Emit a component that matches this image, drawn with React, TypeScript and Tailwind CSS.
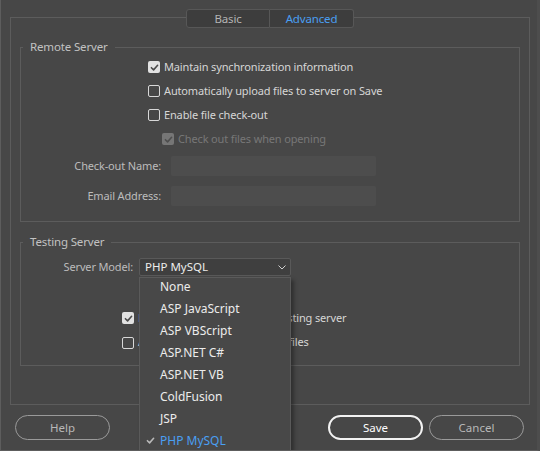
import React from 'react';

const font = { fontFamily: '"Noto Sans", "Open Sans", sans-serif' };

const Check = ({ className }: { className: string }) => (
    <svg viewBox="0 0 12 12" className={className} fill="none">
        <path d="M2.6 6.2 L5 8.6 L9.4 3.6" stroke="currentColor" strokeWidth="1.7" strokeLinecap="round" strokeLinejoin="round" />
    </svg>
);

const Checkbox = ({ checked, disabled }: { checked?: boolean; disabled?: boolean }) => {
    if (checked) {
        return (
            <span
                className={`w-[12px] h-[12px] rounded-[2px] flex items-center justify-center shrink-0 ${
                    disabled ? 'bg-[#767676] text-[#4e4e4e]' : 'bg-[#e2e2e2] text-[#4a4a4a]'
                }`}
            >
                <Check className="w-[11px] h-[11px]" />
            </span>
        );
    }
    return <span className="w-[12px] h-[12px] rounded-[2px] border border-[#d8d8d8] shrink-0"></span>;
};

const CheckRow = ({ label, checked, disabled, indent, h = 'h-[24px]' }: { label: string; checked?: boolean; disabled?: boolean; indent: string; h?: string }) => (
    <div className={`${h} flex items-center gap-[4px] ${indent}`}>
        <Checkbox checked={checked} disabled={disabled} />
        <span className={`whitespace-nowrap ${disabled ? 'text-[#777777]' : 'text-[#d6d6d6]'}`}>{label}</span>
    </div>
);

const serverModels = ['None', 'ASP JavaScript', 'ASP VBScript', 'ASP.NET C#', 'ASP.NET VB', 'ColdFusion', 'JSP', 'PHP MySQL'];

export default function App() {
    return (
        <div
            style={font}
            className="w-[540px] h-[451px] bg-[#474747] border-l border-b border-r-[3px] border-l-[#5d5d5d] border-b-[#5d5d5d] border-r-[#4d4d4d] text-[11px] tracking-[-0.15px] text-[#d6d6d6] overflow-hidden"
        >
            <div className="pt-[17px] pl-[9px]">
                <div className="w-[520px] h-[388px] border border-[#5c5c5c]">
                    {/* tabs */}
                    <div className="flex justify-center -mt-[9px]">
                        <div className="w-[84px] h-[19px] bg-[#3d3d3d] border border-[#575757] rounded-l-[3px] flex items-center justify-center text-[#b4b4b4] text-[11.5px]">
                            Basic
                        </div>
                        <div className="w-[84px] h-[19px] bg-[#3d3d3d] border border-l-0 border-[#575757] rounded-r-[3px] flex items-center justify-center text-[#4a9ff2] text-[11.5px]">
                            Advanced
                        </div>
                    </div>

                    {/* Remote Server */}
                    <fieldset className="mx-[9px] mt-[11px] border border-[#5c5c5c] pb-[15px]">
                        <legend className="ml-[2px] px-[7px] text-[#c2c2c2] leading-[16px] text-[11.5px]">Remote Server</legend>
                        <CheckRow indent="pl-[127px]" checked label="Maintain synchronization information" />
                        <CheckRow indent="pl-[127px]" label="Automatically upload files to server on Save" />
                        <CheckRow indent="pl-[127px]" label="Enable file check-out" />
                        <CheckRow indent="pl-[141px]" checked disabled label="Check out files when opening" />
                        <div className="mt-[5px] flex items-center gap-[10px]">
                            <span className="w-[140px] text-right text-[#bcbcbc]">Check-out Name:</span>
                            <div className="w-[205px] h-[20px] bg-[#4d4d4d] rounded-[2px]"></div>
                        </div>
                        <div className="mt-[10px] flex items-center gap-[10px]">
                            <span className="w-[140px] text-right text-[#bcbcbc]">Email Address:</span>
                            <div className="w-[205px] h-[20px] bg-[#4d4d4d] rounded-[2px]"></div>
                        </div>
                    </fieldset>

                    {/* Testing Server */}
                    <fieldset className="mx-[9px] mt-[12px] border border-[#5c5c5c] pb-[10px]">
                        <legend className="ml-[2px] px-[7px] text-[#c2c2c2] leading-[16px] text-[11.5px]">Testing Server</legend>
                        <div className="mt-[8px] flex items-center gap-[6px]">
                            <span className="w-[112px] text-right text-[#bcbcbc]">Server Model:</span>
                            <div className="relative">
                                <div className="w-[152px] h-[18px] bg-[#3f3f3f] border border-[#595959] rounded-[2px] flex items-center justify-between pl-[5px] pr-[4px] text-[#ececec] text-[11.5px] tracking-normal">
                                    <span>PHP MySQL</span>
                                    <svg viewBox="0 0 8 5" className="w-[8px] h-[5px]" fill="none">
                                        <path d="M0.5 0.5 L4 4 L7.5 0.5" stroke="#cfcfcf" strokeWidth="1" />
                                    </svg>
                                </div>
                                <div className="absolute left-0 top-[19px] z-10 w-[152px] h-[190px] bg-[#484848] border border-[#5a5a5a] shadow-[3px_3px_4px_rgba(0,0,0,0.35)] text-[12px] tracking-normal">
                                    {serverModels.map((m, i) => (
                                        <div
                                            key={m}
                                            className={`relative h-[22px] flex items-center pl-[20px] ${i === 0 ? '-mt-[2px]' : ''} ${
                                                m === 'PHP MySQL' ? 'text-[#4a9ff2]' : 'text-[#ececec]'
                                            }`}
                                        >
                                            {m === 'PHP MySQL' && (
                                                <Check className="absolute left-[5px] top-[5px] w-[11px] h-[11px] text-[#b8b8b8]" />
                                            )}
                                            <span className="whitespace-nowrap">{m}</span>
                                        </div>
                                    ))}
                                </div>
                            </div>
                        </div>
                        <div className="mt-[30px]">
                            <CheckRow indent="pl-[101px]" checked label="Refresh Live View using the testing server" />
                            <CheckRow indent="pl-[101px]" h="h-[25px]" label="Automatically pull dependent files" />
                        </div>
                    </fieldset>
                </div>

                {/* buttons */}
                <div className="mt-[10px] flex items-center w-[520px] text-[11.5px] tracking-normal">
                    <button className="ml-[5px] w-[95px] h-[25px] rounded-full border border-[#9a9a9a] text-[#b8b8b8]">Help</button>
                    <button className="ml-auto w-[95px] h-[25px] rounded-full border-2 border-[#f2f2f2] text-white">Save</button>
                    <button className="ml-[6px] mr-[6px] w-[95px] h-[25px] rounded-full border border-[#9a9a9a] text-[#b8b8b8]">Cancel</button>
                </div>
            </div>
        </div>
    );
}
